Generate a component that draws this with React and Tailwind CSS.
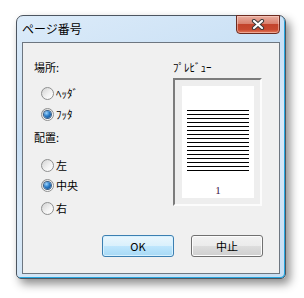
const Radio = ({ checked, label, className = "" }) => (
  <div className={`flex items-center h-[14px] ${className}`}>
    <span className="ml-[7px] w-[13px] h-[13px] rounded-full border border-[#8e8f8f] bg-[linear-gradient(135deg,#d2d2d2,#f4f4f4_60%,#ffffff)] flex items-center justify-center shrink-0">
      {checked && (
        <span className="w-[7px] h-[7px] rounded-full bg-[radial-gradient(circle_at_35%_30%,#9fd6ff,#2a7cc8_45%,#0c3f7a)] shadow-[0_0_0_1px_#3b5f86]" />
      )}
    </span>
    <span className="ml-[2px] text-[11px] leading-[14px] text-black">{label}</span>
  </div>
);

const Button = ({ children, primary }) => (
  <button
    className={`w-[72px] h-[22px] rounded-[3px] border text-[11px] leading-none text-black flex items-center justify-center ${
      primary
        ? "border-[#3c7fb1] bg-[linear-gradient(#eaf6fd_0%,#d9f0fc_50%,#bee6fd_51%,#a7d9f5_100%)] shadow-[inset_0_0_0_1px_#d6f1ff]"
        : "border-[#707070] bg-[linear-gradient(#f2f2f2_0%,#ebebeb_50%,#dddddd_51%,#cfcfcf_100%)] shadow-[inset_0_0_0_1px_#fcfcfc]"
    }`}
  >
    {children}
  </button>
);

export default function App() {
  const lines = Array.from({ length: 16 });

  return (
    <div
      className="w-[304px] h-[298px] bg-white pl-[16px] pt-[15px]"
      style={{ fontFamily: '"Noto Sans CJK JP", "Noto Sans", sans-serif' }}
    >
      <div className="w-[270px] h-[264px] rounded-t-[7px] rounded-b-[5px] border border-[#4c5560] bg-[linear-gradient(160deg,#dcebf9_0%,#c9e0f5_35%,#dbeaf8_55%,#c6def3_100%)] shadow-[inset_-1px_-1px_0_#27a6df,4px_5px_10px_rgba(0,0,0,0.45)] flex flex-col">
        {/* title bar */}
        <div className="h-[26px] flex items-start justify-between">
          <div className="pl-[5px] pt-[5px] text-[12px] leading-[16px] text-black">
            ページ番号
          </div>
          <div className="mt-[-1px] mr-[5px] w-[44px] h-[19px] rounded-b-[4px] border border-[#6b2b20] bg-[linear-gradient(#e9ad9f_0%,#d9826f_45%,#c2442c_50%,#c84a30_80%,#e47a5c_100%)] shadow-[inset_0_0_0_1px_rgba(255,220,210,0.5)] flex items-center justify-center">
            <svg width="14" height="11" viewBox="0 0 14 11">
              <path d="M3 2 L11 9 M11 2 L3 9" stroke="#3b3b3b" strokeWidth="4.2" strokeLinecap="round" />
              <path d="M3 2 L11 9 M11 2 L3 9" stroke="#ffffff" strokeWidth="2.2" strokeLinecap="round" />
            </svg>
          </div>
        </div>

        {/* client */}
        <div className="mx-[5px] h-[232px] border border-[#6d7680] bg-[#f0f0f0] flex flex-col">
          <div className="h-[192px] flex">
            <div className="w-[150px] pl-[11px] pt-[17px] flex flex-col">
              <div className="text-[11px] leading-[14px] text-black">場所:</div>
              <Radio label="ﾍｯﾀﾞ" className="mt-[12px]" />
              <Radio label="ﾌｯﾀ" checked className="mt-[7px]" />
              <div className="mt-[9px] text-[11px] leading-[14px] text-black">配置:</div>
              <Radio label="左" className="mt-[14px]" />
              <Radio label="中央" checked className="mt-[6px]" />
              <Radio label="右" className="mt-[9px]" />
            </div>
            <div className="pt-[17px] flex flex-col">
              <div className="text-[11px] leading-[14px] text-black">ﾌﾟﾚﾋﾞｭｰ</div>
              <div className="mt-[4px] w-[89px] h-[128px] border-2 border-t-[#7c7c7c] border-l-[#7c7c7c] border-b-[#fcfcfc] border-r-[#fcfcfc] bg-[#eeeeee] pl-[7px] pt-[6px]">
                <div className="w-[72px] h-[112px] bg-white px-[5px] pt-[24px] flex flex-col">
                  {lines.map((_, i) => (
                    <div key={i} className="h-px bg-black mb-[3px]" />
                  ))}
                  <div
                    className="mt-[9px] text-center text-[11px] leading-[14px] text-[#3a1648]"
                    style={{ fontFamily: '"Liberation Serif", serif' }}
                  >
                    1
                  </div>
                </div>
              </div>
            </div>
          </div>
          <div className="flex justify-end gap-[17px] pr-[16px]">
            <Button primary>OK</Button>
            <Button>中止</Button>
          </div>
        </div>
      </div>
    </div>
  );
}
